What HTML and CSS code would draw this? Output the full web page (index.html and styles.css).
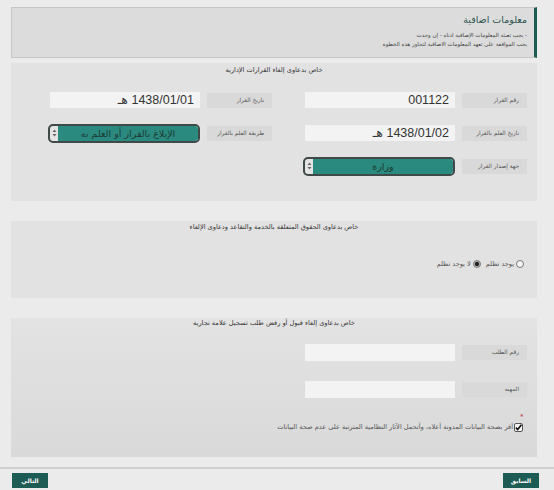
FILE: index.html
```html
<!DOCTYPE html>
<html lang="ar" dir="rtl">
<head>
<meta charset="UTF-8"/>
<title>معلومات اضافية</title>
<link rel="stylesheet" href="styles.css">
</head>
<body>

<div class="wrap">
  <section class="notice">
    <h2>معلومات اضافية</h2>
    <p>- يجب تعبئة المعلومات الإضافية ادناه - إن وجدت</p>
    <p>يجب الموافقة على تعهد المعلومات الاضافية لتجاوز هذه الخطوة</p>
  </section>

  <section class="panel p1">
    <div class="panel-title">خاص بدعاوى إلغاء القرارات الإدارية</div>
    <div class="grid">
      <div class="field"><span class="lbl">رقم القرار</span><div class="inp">001122</div></div>
      <div class="field"><span class="lbl">تاريخ القرار</span><div class="inp">1438/01/01 هـ</div></div>
      <div class="field"><span class="lbl">تاريخ العلم بالقرار</span><div class="inp">1438/01/02 هـ</div></div>
      <div class="field">
        <span class="lbl">طريقة العلم بالقرار</span>
        <div class="select"><span class="opt">الإبلاغ بالقرار أو العلم به</span><span class="arrow"><svg width="5" height="8" viewBox="0 0 5 8"><path d="M2.5 0.5 L4.5 3 L0.5 3 Z M2.5 7.5 L4.5 5 L0.5 5 Z" fill="#666"/></svg></span></div>
      </div>
      <div class="field">
        <span class="lbl">جهة إصدار القرار</span>
        <div class="select"><span class="opt">وزارة</span><span class="arrow"><svg width="5" height="8" viewBox="0 0 5 8"><path d="M2.5 0.5 L4.5 3 L0.5 3 Z M2.5 7.5 L4.5 5 L0.5 5 Z" fill="#666"/></svg></span></div>
      </div>
    </div>
  </section>

  <section class="panel p2">
    <div class="panel-title">خاص بدعاوى الحقوق المتعلقة بالخدمة والتقاعد ودعاوى الإلغاء</div>
    <div class="radios">
      <span class="radio"></span><span class="rtxt">يوجد تظلم</span>
      <span class="radio on"></span><span class="rtxt">لا يوجد تظلم</span>
    </div>
  </section>

  <section class="panel p3">
    <div class="panel-title">خاص بدعاوى إلغاء قبول أو رفض طلب تسجيل علامة تجارية</div>
    <div class="grid one">
      <div class="field"><span class="lbl">رقم الطلب</span><div class="inp"></div></div>
      <div class="field"><span class="lbl">المهنه</span><div class="inp"></div></div>
    </div>
    <div class="agree">
      <span class="check"><span class="req">*</span><svg width="9" height="9" viewBox="0 0 9 9"><rect x="0.5" y="0.5" width="8" height="8" rx="1.5" fill="#f4f4f4" stroke="#555"/><path d="M1.8 4.6 L3.7 6.6 L7.4 1.8" fill="none" stroke="#111" stroke-width="1.6"/></svg></span>
      <span class="atxt">أقر بصحة البيانات المدونة أعلاه، وأتحمل الآثار النظامية المترتبة على عدم صحة البيانات</span>
    </div>
  </section>
</div>

<div class="actions">
  <button class="btn">السابق</button>
  <button class="btn">التالي</button>
</div>

</body>
</html>
```

FILE: styles.css
```css
body {
  margin:0; background:#ebebeb; color:#444;
  font-family:"DejaVu Sans","Liberation Sans",sans-serif;
  width:554px; height:490px; overflow:hidden;
}
.wrap { padding:7px 17px 0 11px; }

.notice {
  height:51px; box-sizing:border-box;
  background:#dcdcdc; border:1px solid #c6c6c6; border-right:3px solid #1e5a53;
  padding:5px 7px 0;
}
.notice h2 { margin:0; font-size:9.5px; line-height:13px; font-weight:normal; color:#2d5650; }
.notice p { margin:0; font-size:5.5px; line-height:9px; color:#444; }
.notice h2 + p { margin-top:5px; }

.panel {
  box-sizing:border-box; background:#e2e2e2;
  padding:0 10px;
}
.p1 { margin-top:5px; height:138px; padding-top:2px; }
.p2 { margin-top:20px; height:77px; padding-top:1px; }
.p3 { margin-top:20px; height:139px; background:linear-gradient(#e3e3e3,#d9d9d9); }
.panel-title {
  text-align:center; font-size:6.6px; line-height:10px; color:#333;
}

.grid {
  display:grid; grid-template-columns:222px 222px; column-gap:33px;
  grid-auto-rows:20px; row-gap:13px; margin-top:15px;
}
.field { display:flex; align-items:center; gap:7px; }
.lbl {
  width:65px; height:15px; flex:none; box-sizing:border-box;
  background:#d9d9d9; font-size:5.8px; line-height:15px; padding-right:8px; color:#555;
}
.inp {
  width:150px; height:16px; flex:none; box-sizing:border-box;
  background:#f3f3f3; padding:0 6px;
  font-family:"Liberation Sans","DejaVu Sans",sans-serif; font-size:12.5px; line-height:16px; color:#333;
}
.select {
  width:152px; height:19px; flex:none; box-sizing:border-box;
  display:flex; border:2px solid #3f4a48; border-radius:5px; background:#e4e4e4; overflow:hidden;
}
.select .opt {
  flex:1; background:#2b8a7f; text-align:center;
  font-size:9.5px; line-height:15px; color:#1b3a35;
}
.select .arrow { width:8px; display:flex; align-items:center; justify-content:center; }

.radios {
  display:flex; align-items:center; margin-top:28px; padding-right:3px;
  font-size:6.5px; color:#555;
}
.radio {
  width:6px; height:6px; border:1px solid #777; border-radius:50%; background:#f6f6f6;
}
.radio.on { background:radial-gradient(#222 45%,#bbb 55%); }
.rtxt { margin:0 2px 0 5px; }

.p3 .grid { grid-template-columns:222px; grid-auto-rows:17px; row-gap:20px; margin-top:16px; }
.p3 .inp { height:17px; }

.agree {
  display:flex; align-items:center; gap:1px; margin-top:22px; padding-right:4px;
  height:14px; font-size:6.6px; color:#555;
}
.check { position:relative; display:flex; }
.req { position:absolute; top:-10px; left:6px; color:#c0303a; font-size:7px; }

.actions {
  margin-top:10px; border-top:2px solid #d0d0d0;
  display:flex; justify-content:space-between; padding:4px 15px 0 12px;
}
.btn {
  width:36px; height:15px; border:none; padding:0;
  background:#1d5c54; color:#fff; font-family:inherit; font-size:6px; font-weight:bold;
}
```
